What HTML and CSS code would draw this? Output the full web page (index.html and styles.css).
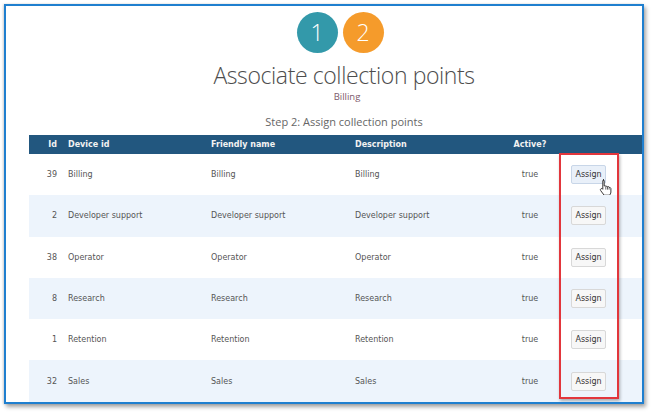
FILE: index.html
```html
<!DOCTYPE html>
<html>
<head>
<meta charset="utf-8">
<link rel="stylesheet" href="styles.css">
</head>
<body>
<div class="frame">
  <div class="content">
    <div class="steps">
      <div class="step step-done">1</div>
      <div class="step step-current">2</div>
    </div>
    <h1 class="title">Associate collection points</h1>
    <div class="subtitle">Billing</div>
    <div class="steptext">Step 2: Assign collection points</div>
    <table class="grid">
      <colgroup>
        <col class="c-id"><col class="c-dev"><col class="c-name"><col class="c-desc"><col class="c-act"><col class="c-btn">
      </colgroup>
      <thead>
        <tr><th class="num">Id</th><th>Device id</th><th>Friendly name</th><th>Description</th><th class="center">Active?</th><th></th></tr>
      </thead>
      <tbody>
        <tr><td class="num">39</td><td>Billing</td><td>Billing</td><td>Billing</td><td class="center">true</td><td class="btncell"><button class="assign hover">Assign</button><svg class="cursor" width="13" height="16" viewBox="0 0 13 16"><path d="M4 0.8c.7 0 1.2.5 1.2 1.2v5l.4-.1c.6-.1 1.1.1 1.4.5.5-.3 1.2-.2 1.6.3.5-.3 1.300-.1 1.6.4l.1.3c.6-.2 1.2.1 1.4.6l.2.6v3.4c0 .8-.2 1.4-.6 2l-.7 1.2H5.1L1.7 11.6c-.5-.6-.4-1.4.2-1.8.5-.4 1.2-.3 1.6.1l.3.3V2c0-.7.5-1.2 1.2-1.2z" fill="#fff" stroke="#222" stroke-width="0.9" stroke-linejoin="round"/><path d="M6.8 7.6v3M8.5 8v2.6M10.1 8.4v2.2" stroke="#222" stroke-width="0.7"/></svg></td></tr>
        <tr class="alt"><td class="num">2</td><td>Developer support</td><td>Developer support</td><td>Developer support</td><td class="center">true</td><td class="btncell"><button class="assign">Assign</button></td></tr>
        <tr><td class="num">38</td><td>Operator</td><td>Operator</td><td>Operator</td><td class="center">true</td><td class="btncell"><button class="assign">Assign</button></td></tr>
        <tr class="alt"><td class="num">8</td><td>Research</td><td>Research</td><td>Research</td><td class="center">true</td><td class="btncell"><button class="assign">Assign</button></td></tr>
        <tr><td class="num">1</td><td>Retention</td><td>Retention</td><td>Retention</td><td class="center">true</td><td class="btncell"><button class="assign">Assign</button></td></tr>
        <tr class="alt"><td class="num">32</td><td>Sales</td><td>Sales</td><td>Sales</td><td class="center">true</td><td class="btncell"><button class="assign">Assign</button></td></tr>
      </tbody>
    </table>
  </div>
  <div class="highlight"></div>
</div>
</body>
</html>
```
FILE: styles.css
```css
html, body {
  margin: 0;
  padding: 0;
  background: #ffffff;
}
body {
  width: 654px;
  height: 416px;
  overflow: hidden;
  font-family: "DejaVu Sans", Verdana, sans-serif;
}
.frame {
  position: relative;
  margin: 4px 0 0 4px;
  width: 640px;
  height: 400px;
  box-sizing: border-box;
  border: 2px solid #1f7fcf;
  background: #fff;
  overflow: hidden;
  box-shadow: 2px 3px 4px rgba(0, 0, 0, 0.35), -1px 0 2px rgba(0, 0, 0, 0.15);
}
.content {
  margin-left: 23px;
  width: 630px;
}
.steps {
  display: flex;
  justify-content: center;
  gap: 5px;
  padding-top: 6px;
  margin-left: -8px;
}
.step {
  width: 41px;
  height: 41px;
  border-radius: 50%;
  color: #fff;
  font-family: "Open Sans", sans-serif;
  font-weight: 300;
  font-size: 23px;
  line-height: 41px;
  text-align: center;
}
.step-done { background: #3399aa; }
.step-current { background: #f59b2b; }
.title {
  margin: 7px 0 0;
  font-family: "Open Sans", sans-serif;
  font-weight: 300;
  font-size: 23px;
  line-height: 30px;
  color: #4d4d4d;
  text-align: center;
  letter-spacing: -0.4px;
}
.subtitle {
  font-family: "Open Sans", sans-serif;
  font-size: 9.5px;
  line-height: 14px;
  color: #7d5a6c;
  text-align: center;
  margin-left: 6px;
}
.steptext {
  margin-top: 10px;
  font-family: "Open Sans", sans-serif;
  font-size: 11px;
  line-height: 16px;
  color: #666;
  text-align: center;
}
.grid {
  margin-top: 5px;
  width: 630px;
  table-layout: fixed;
  border-collapse: collapse;
  font-size: 8px;
}
.c-id { width: 33px; }
.c-dev { width: 143px; }
.c-name { width: 144px; }
.c-desc { width: 143px; }
.c-act { width: 76px; }
.c-btn { width: 91px; }
.grid th {
  background: #22577f;
  color: #f2f2f2;
  font-weight: bold;
  text-align: left;
  height: 19px;
  padding: 0 6px;
  box-sizing: border-box;
}
.grid td {
  height: 41.3px;
  padding: 0 6px;
  color: #555;
  box-sizing: border-box;
}
.grid .num {
  text-align: right;
  padding-right: 5px;
  padding-left: 0;
}
.grid .center { text-align: center; padding: 0; }
.grid tr.alt td { background: #edf4fc; }
.btncell { position: relative; padding-left: 3px !important; }
.assign {
  font-family: "DejaVu Sans", Verdana, sans-serif;
  font-size: 8px;
  color: #333;
  background: #f7f7f7;
  border: 1px solid #d8d8d8;
  border-radius: 2px;
  width: 35px;
  height: 19px;
  padding: 0;
}
.assign.hover {
  background: #e9f0f9;
  border-color: #c8d6e8;
}
.cursor {
  position: absolute;
  left: 31px;
  top: 25px;
}
.highlight {
  position: absolute;
  left: 553px;
  top: 147px;
  width: 60px;
  height: 246px;
  box-sizing: border-box;
  border: 2px solid #e2363c;
  box-shadow: 1px 2px 3px rgba(0, 0, 0, 0.3);
}
```
